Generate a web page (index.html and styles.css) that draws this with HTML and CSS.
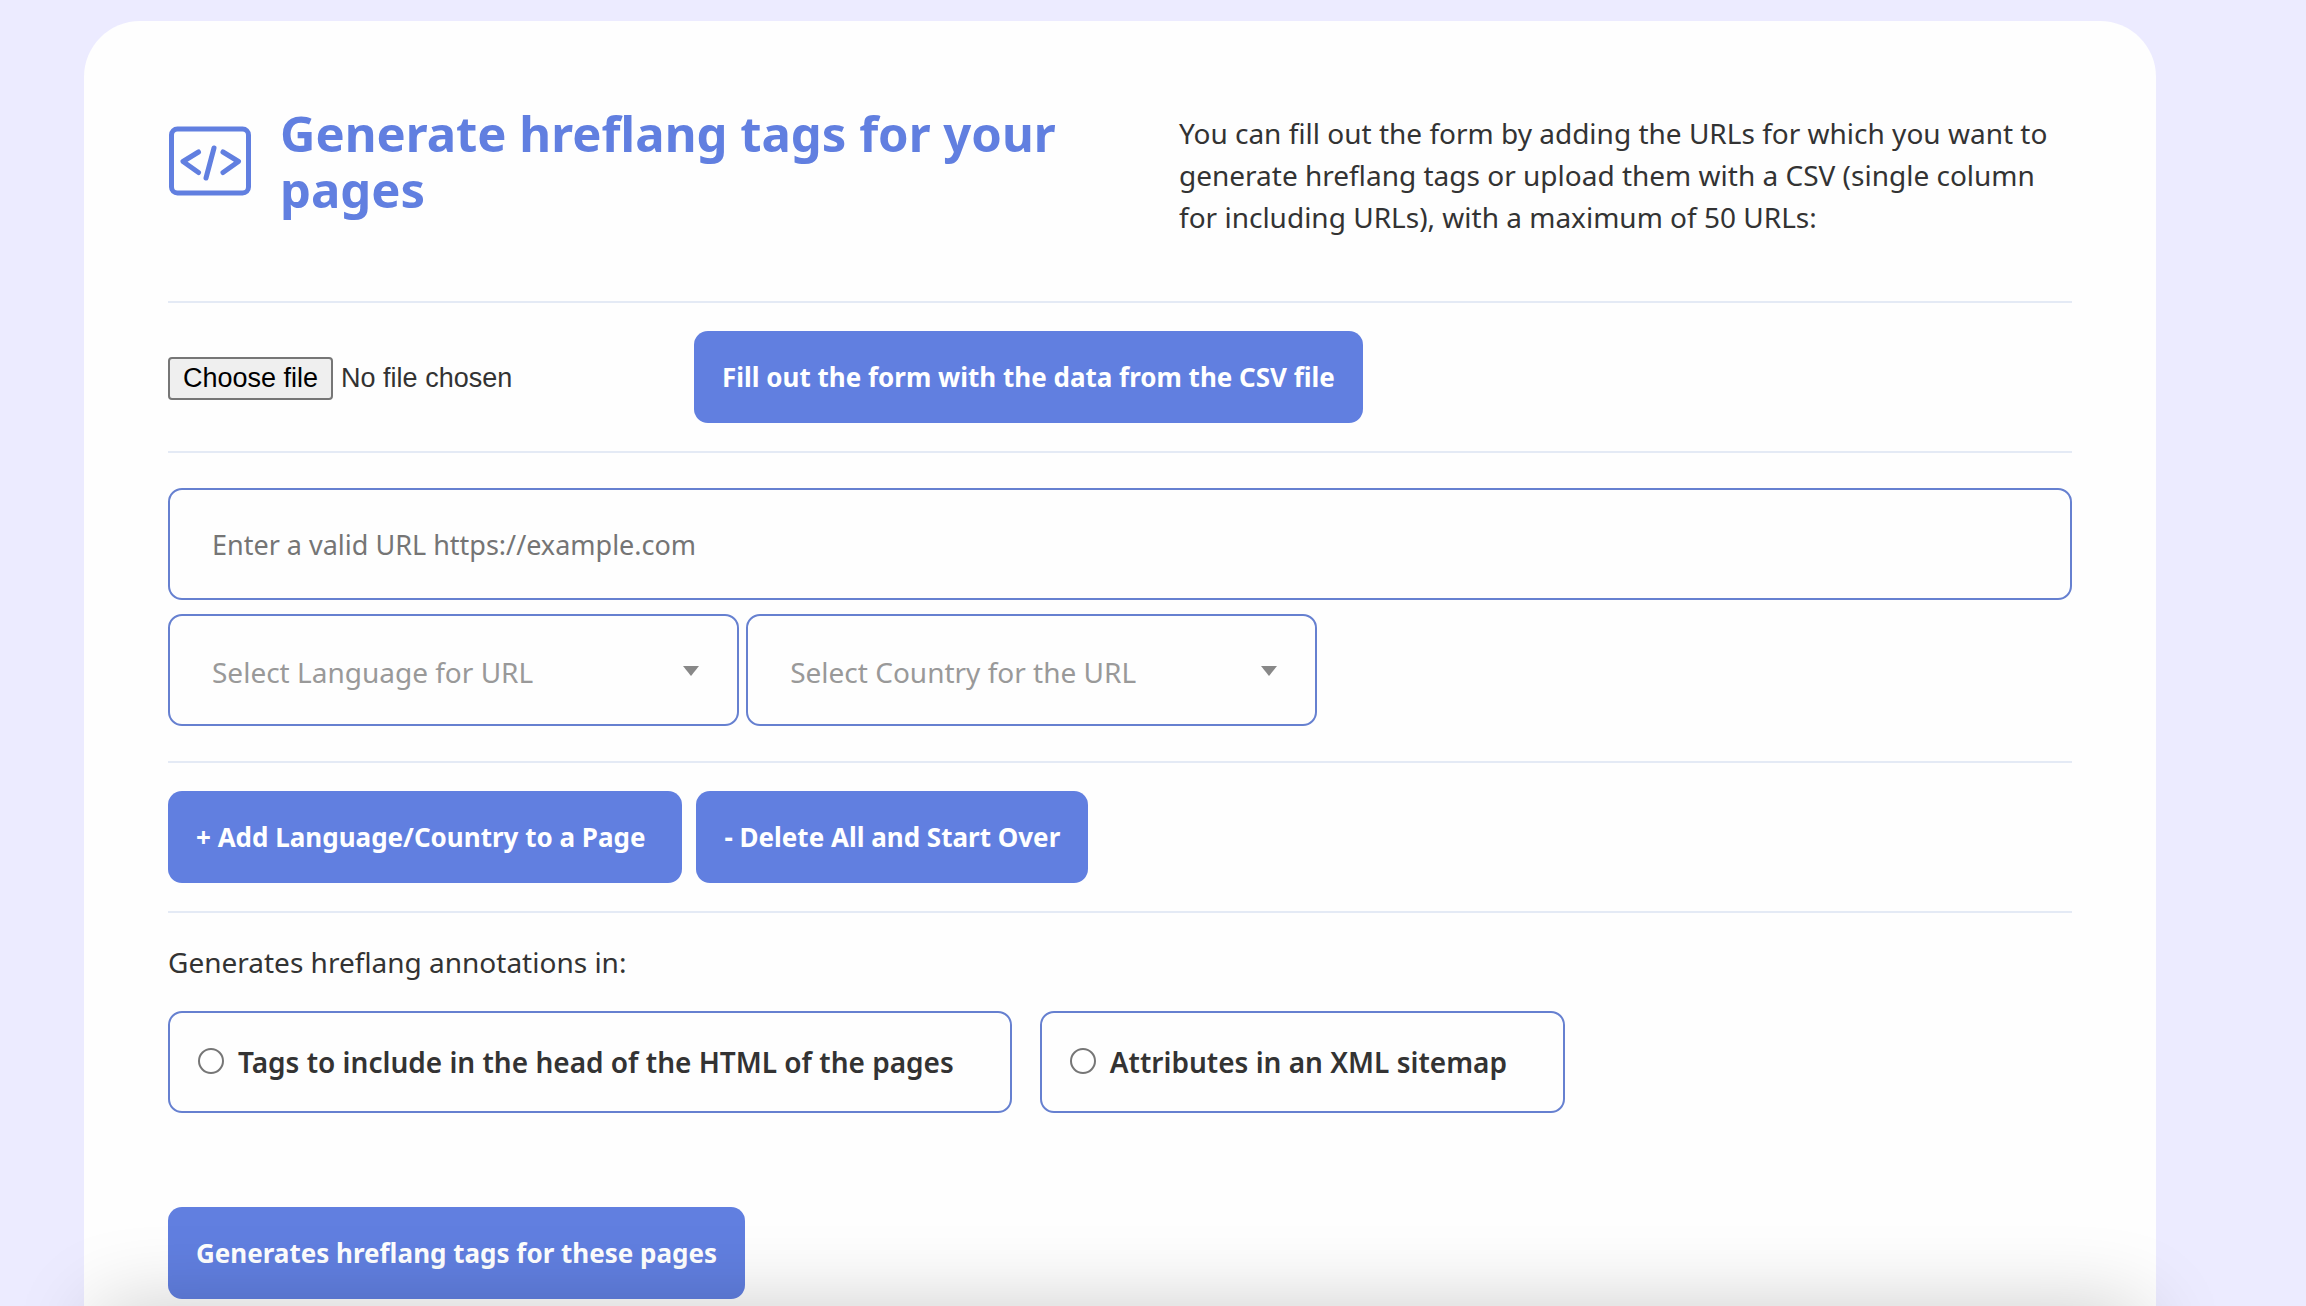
FILE: index.html
```html
<!DOCTYPE html>
<html lang="en">
<head>
  <meta charset="utf-8">
  <meta name="viewport" content="width=device-width, initial-scale=1">
  <title>Hreflang tags generator</title>
  <link rel="stylesheet" href="styles.css">
</head>
<body>
  <main class="card">
    <header class="intro">
      <div class="intro-title">
        <svg class="intro-icon" viewBox="0 0 84 72" fill="none" stroke="currentColor" stroke-width="5" stroke-linecap="round" stroke-linejoin="round" aria-hidden="true">
          <rect x="3.5" y="4" width="77" height="64" rx="6"/>
          <path d="M30.500 27L15 36.500L30.500 47.500M46 23L38 53M55 27L70.500 36.500L55 47.500"/>
        </svg>
        <h1>Generate hreflang tags for your pages</h1>
      </div>
      <p class="intro-text">You can fill out the form by adding the URLs for which you want to generate hreflang tags or upload them with a CSV (single column for including URLs), with a maximum of 50 URLs:</p>
    </header>

    <form class="form">
      <section class="row upload">
        <div class="file">
          <input class="file-input" type="file" id="csv" accept=".csv">
          <label class="file-button" for="csv">Choose file</label>
          <span class="file-name">No file chosen</span>
        </div>
        <button class="button" type="button">Fill out the form with the data from the CSV file</button>
      </section>

      <section class="row fields">
        <input class="url" type="url" placeholder="Enter a valid URL https://example.com" aria-label="URL">
        <div class="selects">
          <div class="select">
            <select aria-label="Language">
              <option>Select Language for URL</option>
            </select>
          </div>
          <div class="select">
            <select aria-label="Country">
              <option>Select Country for the URL</option>
            </select>
          </div>
        </div>
      </section>

      <section class="row actions">
        <button class="button button-add" type="button">+ Add Language/Country to a Page</button>
        <button class="button" type="reset">- Delete All and Start Over</button>
      </section>

      <fieldset class="formats">
        <legend>Generates hreflang annotations in:</legend>
        <div class="options">
          <label class="option"><input type="radio" name="format" value="html">Tags to include in the head of the HTML of the pages</label>
          <label class="option"><input type="radio" name="format" value="xml">Attributes in an XML sitemap</label>
        </div>
      </fieldset>

      <button class="button" type="submit">Generates hreflang tags for these pages</button>
    </form>
  </main>
  <div class="bottom-shade" aria-hidden="true"></div>
</body>
</html>
```
FILE: styles.css
```css
:root {
  --blue: #617fe0;
  --line: #e4eaf5;
  --text: #333;
}

* {
  box-sizing: border-box;
}

html {
  scrollbar-width: none;
}

body {
  margin: 0;
  padding: 21px 150px 0 84px;
  background: #ecebff;
  color: var(--text);
  font: 28px/42px "Noto Sans", sans-serif;
}

.card {
  padding: 84px 84px 7px;
  border-radius: 56px 56px 0 0;
  background: #fefefe;
}

.intro {
  display: grid;
  grid-template-columns: 1fr 893px;
  gap: 80px;
  padding-bottom: 63px;
  border-bottom: 2px solid var(--line);
}

.intro-title {
  display: flex;
  align-items: center;
  gap: 28px;
  height: 112px;
  color: var(--blue);
}

.intro-icon {
  flex: none;
  width: 84px;
  height: 72px;
}

h1 {
  margin: 0;
  font-size: 49px;
  line-height: 56px;
}

.intro-text {
  margin: 0;
  padding-top: 7px;
}

.row {
  padding: 28px 0;
  border-bottom: 2px solid var(--line);
}

.upload {
  display: flex;
  align-items: center;
}

.file {
  display: flex;
  align-items: center;
  gap: 8px;
  width: 526px;
  padding-top: 2px;
  font: 27px/30px "Liberation Sans", sans-serif;
}

.file-input {
  position: absolute;
  width: 1px;
  height: 1px;
  opacity: 0;
}

.file-button {
  padding: 4px 13px 5px;
  border: 2px solid #767676;
  border-radius: 4px;
  background: #efefef;
  color: #000;
}

.button {
  display: block;
  height: 92px;
  padding: 0 28px;
  border: 0;
  border-radius: 14px;
  background: var(--blue);
  color: #fff;
  font: 700 26px/42px "Noto Sans", sans-serif;
}

.fields {
  padding: 35px 0;
}

.url,
.select select {
  display: block;
  width: 100%;
  height: 112px;
  padding: 0 42px;
  border: 2px solid #6680d0;
  border-radius: 14px;
  background: transparent;
  font: 27px/42px "Noto Sans", sans-serif;
}

.url::placeholder {
  color: #757575;
}

.selects {
  display: flex;
  gap: 7px;
  margin-top: 14px;
}

.select {
  position: relative;
  width: 30%;
}

.select select {
  appearance: none;
  padding-top: 4px;
  color: #999;
  font-size: 28px;
}

.select::after {
  content: "";
  position: absolute;
  top: 52px;
  right: 40px;
  border: 8px solid transparent;
  border-top: 10px solid #888;
  border-bottom: 0;
  pointer-events: none;
}

.actions {
  display: flex;
  gap: 14px;
}

.button-add {
  padding-right: 37px;
}

.formats {
  margin: 0 0 94px;
  padding: 28px 0 0;
  border: 0;
}

.formats legend {
  float: left;
  width: 100%;
  padding: 0;
  margin-bottom: 28px;
}

.options {
  display: flex;
  clear: both;
  gap: 28px;
}

.option {
  display: flex;
  align-items: center;
  height: 102px;
  padding: 0 56px 0 28px;
  border: 2px solid #6680d0;
  border-radius: 14px;
  font-weight: 600;
}

.option input {
  appearance: none;
  width: 26px;
  height: 26px;
  margin: 0 14px 2px 0;
  border: 2px solid #767676;
  border-radius: 50%;
  background: #fff;
}

.bottom-shade {
  position: fixed;
  right: 164px;
  bottom: -84px;
  left: 98px;
  height: 80px;
  box-shadow: 0 0 84px rgba(0, 0, 0, 0.22);
  pointer-events: none;
}
```
